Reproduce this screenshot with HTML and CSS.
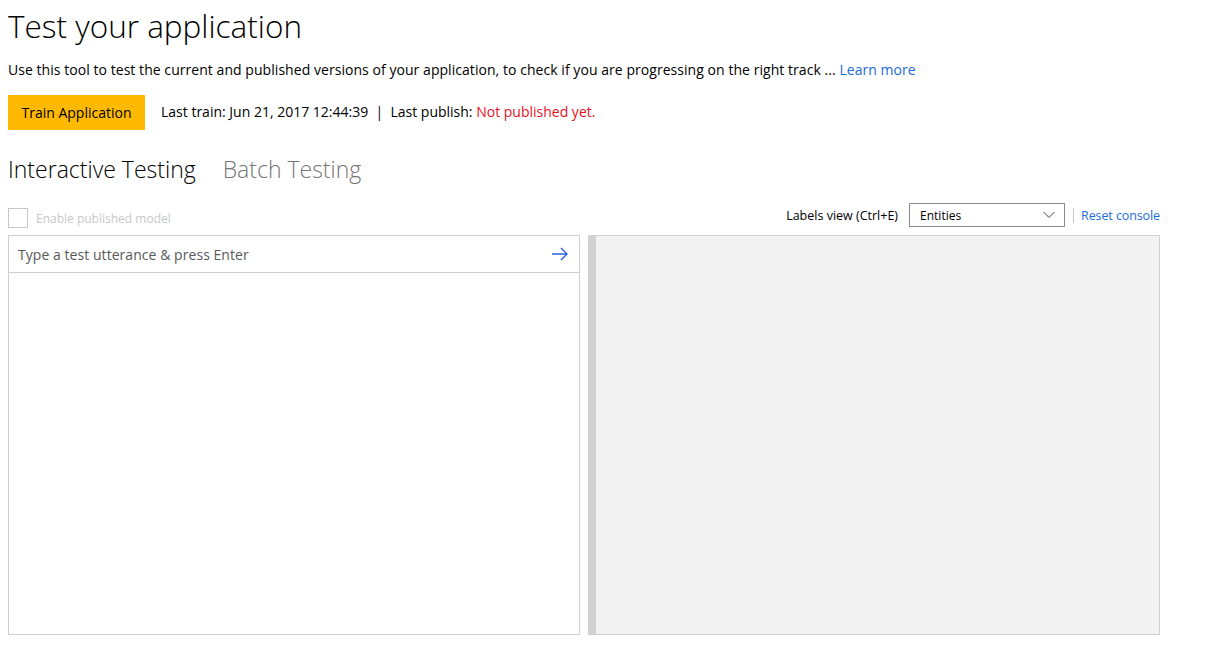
FILE: index.html
```html
<!DOCTYPE html>
<html>
<head>
<meta charset="utf-8">
<link rel="stylesheet" href="styles.css">
</head>
<body>
<div class="page">
  <h1 class="title">Test your application</h1>
  <p class="desc">Use this tool to test the current and published versions of your application, to check if you are progressing on the right track ... <a class="link" href="#">Learn more</a></p>
  <div class="train-row">
    <button class="train-btn">Train Application</button>
    <span class="train-info">Last train: Jun 21, 2017 12:44:39 &nbsp;|&nbsp; Last publish: <span class="red">Not published yet.</span></span>
  </div>
  <div class="tabs">
    <span class="tab active">Interactive Testing</span>
    <span class="tab">Batch Testing</span>
  </div>
  <div class="toolbar">
    <label class="chk-wrap"><span class="chk"></span><span class="chk-label">Enable published model</span></label>
    <div class="right-tools">
      <span class="labels-view">Labels view (Ctrl+E)</span>
      <div class="select"><span>Entities</span>
        <svg class="chev" width="12" height="8" viewBox="0 0 12 8"><path d="M0.5 1 L6 6.5 L11.5 1" fill="none" stroke="#444" stroke-width="1"/></svg>
      </div>
      <span class="sep"></span>
      <a class="link small" href="#">Reset console</a>
    </div>
  </div>
  <div class="panels">
    <div class="left-panel">
      <div class="input-row">
        <span class="placeholder">Type a test utterance &amp; press Enter</span>
        <svg class="arrow" width="18" height="14" viewBox="0 0 18 14"><path d="M1 7 H16 M10 1 L16 7 L10 13" fill="none" stroke="#2b62d9" stroke-width="1.4"/></svg>
      </div>
    </div>
    <div class="right-panel">
      <div class="grip"></div>
      <div class="console"></div>
    </div>
  </div>
</div>
</body>
</html>
```
FILE: styles.css
```css
html, body { margin: 0; padding: 0; background: #fff; }
body { font-family: "Open Sans", "Noto Sans", sans-serif; color: #000; }
.page { padding: 0 8px; width: 1152px; }
.title { font-weight: 300; font-size: 31.5px; margin: 0; padding-top: 5px; line-height: 42px; letter-spacing: 0; }
.desc { font-size: 14px; margin: 13px 0 0; line-height: 20px; letter-spacing: 0.05px; }
.link { color: #1a6cd9; text-decoration: none; }
.train-row { display: flex; align-items: center; margin-top: 15px; height: 35px; }
.train-btn { font-family: inherit; font-size: 14px; background: #ffb900; border: none; height: 35px; width: 137px; padding: 0; color: #000; }
.train-info { font-size: 14px; margin-left: 16px; margin-top: -2px; }
.red { color: #e81123; }
.tabs { display: flex; gap: 27px; margin-top: 24px; height: 30px; align-items: center; }
.tab { font-size: 23px; font-weight: 300; color: #767676; }
.tab.active { color: #000; }
.toolbar { display: flex; justify-content: space-between; align-items: center; margin-top: 15px; height: 32px; }
.chk-wrap { display: flex; align-items: center; margin-top: 6px; }
.chk { width: 18px; height: 18px; border: 1px solid #c8c8c8; display: inline-block; }
.chk-label { font-size: 12px; color: #c8c8c8; margin-left: 8px; }
.right-tools { display: flex; align-items: center; }
.labels-view { font-size: 12.5px; margin-right: 11px; }
.select { border: 1px solid #8a8a8a; display: flex; align-items: center; justify-content: space-between; padding: 0 9px 0 10px; box-sizing: border-box; width: 156px; height: 24px; font-size: 12px; }
.sep { width: 1px; height: 15px; background: #c8c8c8; margin: 0 7px 0 8px; }
.link.small { font-size: 12.5px; letter-spacing: -0.1px; }
.panels { display: flex; gap: 8px; height: 400px; margin-top: 4px; }
.left-panel { width: 572px; border: 1px solid #d0d0d0; box-sizing: border-box; }
.input-row { height: 37px; border-bottom: 1px solid #d0d0d0; display: flex; align-items: center; justify-content: space-between; padding: 0 10px 0 9px; box-sizing: border-box; }
.placeholder { font-size: 14px; color: #595959; letter-spacing: 0.05px; }
.right-panel { width: 572px; display: flex; border: 1px solid #d0d0d0; border-left: none; box-sizing: border-box; }
.grip { width: 8px; background: #d2d2d2; }
.console { flex: 1; background: #f2f2f2; }
```
